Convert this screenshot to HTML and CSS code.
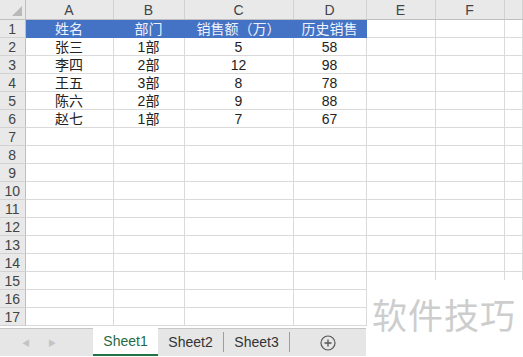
FILE: index.html
```html
<!DOCTYPE html>
<html lang="zh-CN">
<head>
  <meta charset="UTF-8" />
  <title>Sheet1</title>
  <link rel="stylesheet" href="styles.css">
</head>
<body>
  <div class="workbook">
    <table class="sheet">
      <colgroup>
        <col class="col-head">
        <col style="width: 88px">
        <col style="width: 71px">
        <col style="width: 109px">
        <col style="width: 73px">
        <col style="width: 69px">
        <col style="width: 69px">
        <col>
      </colgroup>
      <tr class="col-labels">
        <th class="corner"><span class="corner-mark"></span></th>
        <th>A</th><th>B</th><th>C</th><th>D</th><th>E</th><th>F</th><th></th>
      </tr>
      <tr class="title-row">
        <th>1</th>
        <td class="blue">姓名</td><td class="blue">部门</td><td class="blue">销售额（万）</td><td class="blue">历史销售</td><td></td><td></td><td></td>
      </tr>
      <tr><th>2</th><td>张三</td><td>1部</td><td>5</td><td>58</td><td></td><td></td><td></td></tr>
      <tr><th>3</th><td>李四</td><td>2部</td><td>12</td><td>98</td><td></td><td></td><td></td></tr>
      <tr><th>4</th><td>王五</td><td>3部</td><td>8</td><td>78</td><td></td><td></td><td></td></tr>
      <tr><th>5</th><td>陈六</td><td>2部</td><td>9</td><td>88</td><td></td><td></td><td></td></tr>
      <tr><th>6</th><td>赵七</td><td>1部</td><td>7</td><td>67</td><td></td><td></td><td></td></tr>
      <tr><th>7</th><td></td><td></td><td></td><td></td><td></td><td></td><td></td></tr>
      <tr><th>8</th><td></td><td></td><td></td><td></td><td></td><td></td><td></td></tr>
      <tr><th>9</th><td></td><td></td><td></td><td></td><td></td><td></td><td></td></tr>
      <tr><th>10</th><td></td><td></td><td></td><td></td><td></td><td></td><td></td></tr>
      <tr><th>11</th><td></td><td></td><td></td><td></td><td></td><td></td><td></td></tr>
      <tr><th>12</th><td></td><td></td><td></td><td></td><td></td><td></td><td></td></tr>
      <tr><th>13</th><td></td><td></td><td></td><td></td><td></td><td></td><td></td></tr>
      <tr><th>14</th><td></td><td></td><td></td><td></td><td></td><td></td><td></td></tr>
      <tr><th>15</th><td></td><td></td><td></td><td></td><td></td><td></td><td></td></tr>
      <tr><th>16</th><td></td><td></td><td></td><td></td><td></td><td></td><td></td></tr>
      <tr><th>17</th><td></td><td></td><td></td><td></td><td></td><td></td><td></td></tr>
    </table>

    <div class="tab-bar">
      <div class="tab-nav">
        <span class="arrow">&#9664;</span>
        <span class="arrow">&#9654;</span>
      </div>
      <div class="tab active">Sheet1</div>
      <div class="tab">Sheet2</div>
      <div class="tab">Sheet3</div>
      <div class="tab-add">
        <svg width="16" height="16" viewBox="0 0 16 16">
          <circle cx="8" cy="8" r="7" fill="none" stroke="#555" stroke-width="1.2"/>
          <path d="M8 4.5v7M4.5 8h7" stroke="#555" stroke-width="1.3"/>
        </svg>
      </div>
    </div>

    <div class="watermark">软件技巧</div>
  </div>
</body>
</html>
```

FILE: styles.css
```css
body {
  margin: 0;
  padding: 0;
  background: #fff;
  font-family: "Liberation Sans", "Noto Sans CJK SC", sans-serif;
}

.workbook {
  position: relative;
  width: 523px;
  height: 357px;
  overflow: hidden;
}

.sheet {
  border-collapse: collapse;
  table-layout: fixed;
  width: 523px;
}

.col-head {
  width: 25px;
}

.sheet th,
.sheet td {
  height: 17px;
  padding: 0;
  font-size: 14px;
  font-weight: normal;
  text-align: center;
  line-height: 16px;
  white-space: nowrap;
  overflow: hidden;
  color: #222;
  font-family: "Liberation Sans", "Noto Sans CJK SC", sans-serif;
}

.sheet td {
  border: 1px solid #dadada;
}

.sheet th {
  background: #e9e9e9;
  color: #444;
  border: 1px solid #d2d2d2;
  border-right-color: #bfbfbf;
}

.col-labels th {
  height: 19px;
  border-bottom-color: #bfbfbf;
  border-top: none;
  border-right-color: #d2d2d2;
}

.col-labels th.corner {
  position: relative;
  border-right-color: #bfbfbf;
}

.corner-mark {
  position: absolute;
  right: 3px;
  bottom: 3px;
  width: 0;
  height: 0;
  border-left: 10px solid transparent;
  border-bottom: 10px solid #b9b9b9;
}

.sheet th:first-child {
  border-left: none;
}

.sheet td.blue {
  background: #4472c4;
  color: #eef3fb;
  border-color: #4472c4;
}

.tab-bar {
  display: flex;
  align-items: stretch;
  width: 366px;
  height: 27px;
  margin-top: 2px;
  background: #e6e6e6;
  border-top: 1px solid #c6c6c6;
}

.tab-nav {
  display: flex;
  align-items: center;
  gap: 18px;
  width: 93px;
  padding-left: 22px;
  box-sizing: border-box;
}

.arrow {
  font-size: 8px;
  color: #c4c4c4;
}

.tab {
  width: 65px;
  font-size: 14px;
  color: #333;
  display: flex;
  align-items: center;
  justify-content: center;
  border-right: 1px solid #9e9e9e;
  margin: 3px 0 4px;
}

.tab.active {
  background: #fff;
  color: #1f6b45;
  margin: -1px 0 0;
  border-right: none;
  border-bottom: 2px solid #217346;
}

.tab-add {
  flex: 1;
  display: flex;
  align-items: center;
  justify-content: center;
}

.watermark {
  position: absolute;
  left: 367px;
  top: 280px;
  right: 0;
  bottom: 0;
  background: #fff;
  padding: 14px 0 0 5px;
  font-family: "Noto Sans CJK SC", sans-serif;
  font-size: 35px;
  line-height: 40px;
  letter-spacing: 1px;
  color: #cdcdcd;
}
```
